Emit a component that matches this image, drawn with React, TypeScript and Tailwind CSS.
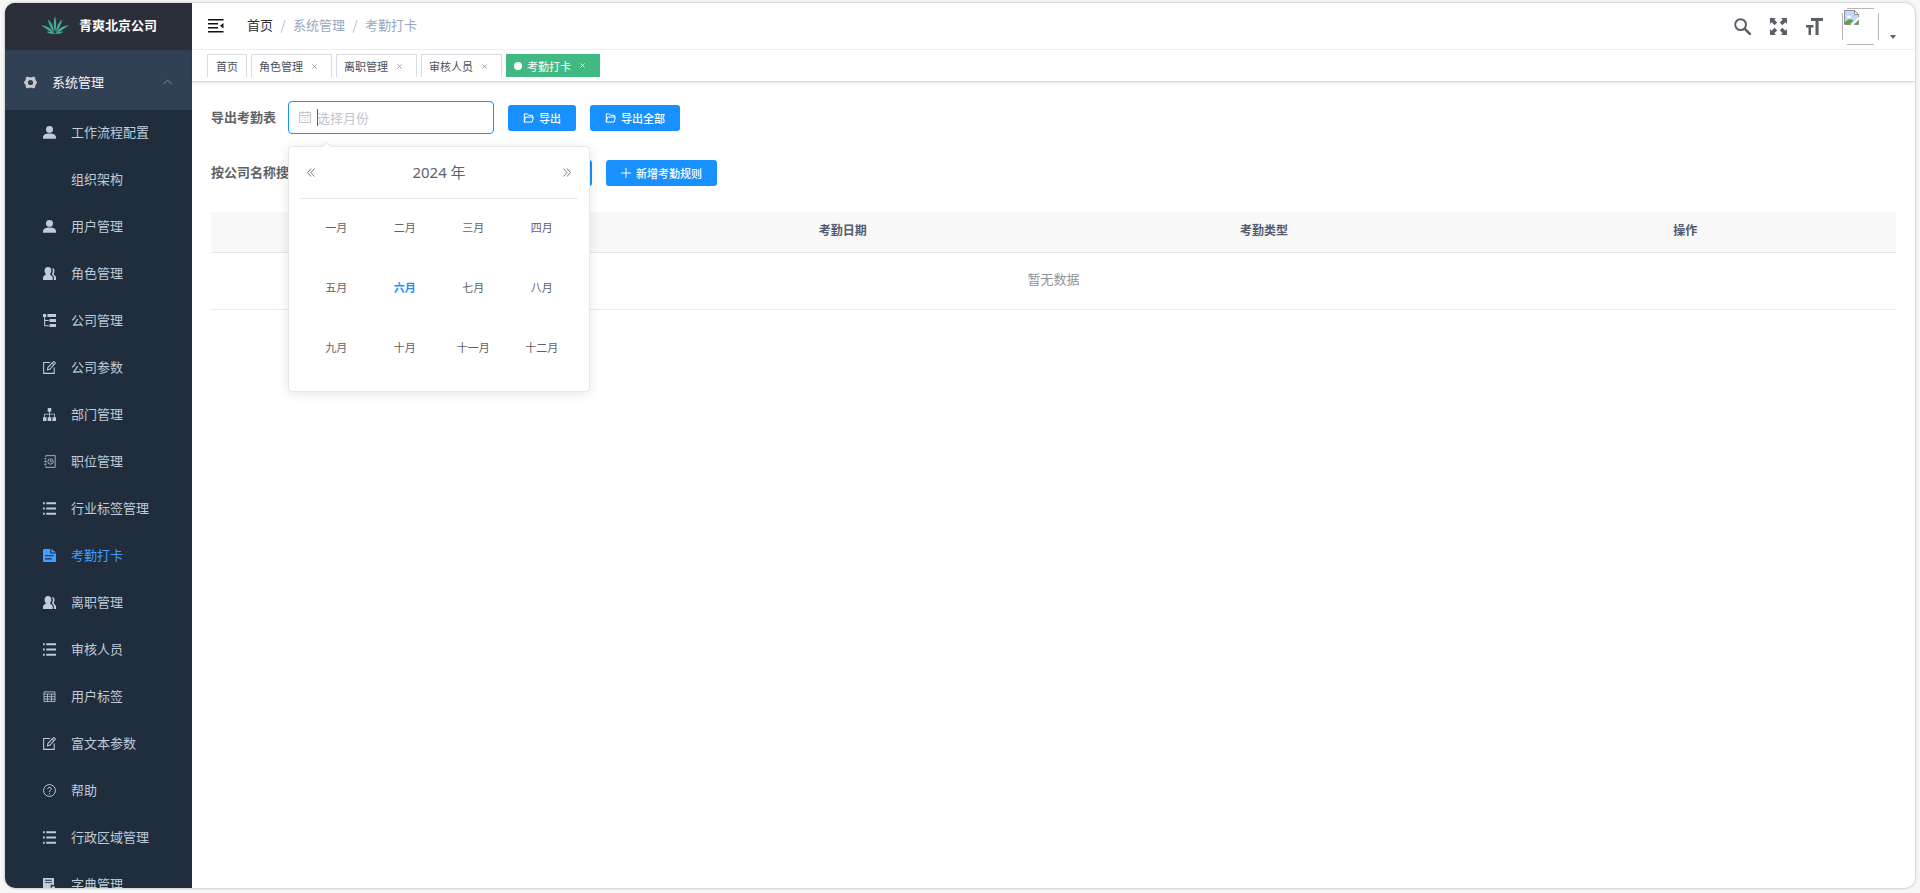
import type { ReactNode } from "react";

type IconName =
  | "user" | "peoples" | "treeTable" | "edit" | "tree" | "post" | "list"
  | "form" | "table" | "help" | "dict";

const iconShapes: Record<IconName, ReactNode> = {
  user: (
    <g fill="currentColor">
      <ellipse cx="8" cy="4.2" rx="4.3" ry="4.2" />
      <path d="M0 15.8V14C0 11 3 9.2 8 9.2s8 1.8 8 4.8v1.8Z" />
    </g>
  ),
  peoples: (
    <g fill="currentColor">
      <path d="M6.2 0C9 0 10.4 2 10.2 4.8 10 6.6 9.400 7.600 8.600 8.500c0 1.600 3.400 2 3.400 4.500v3H0v-3c0-2.500 3.600-2.900 3.600-4.500C2.600 7.500 2 6.500 2 4.800 1.900 2 3.400 0 6.200 0Z" />
      <path d="M11 1.200c2.400.2 3.300 1.900 3.200 4-.1 1.500-.6 2.500-1.200 3.300 0 1.500 3 1.900 3 4.200V16h-2.600v-3c0-2-1.700-3-2.600-4.200.9-1.400 1.300-2.600 1.300-4.200 0-1.300-.4-2.500-1.100-3.400Z" />
    </g>
  ),
  treeTable: (
    <g fill="currentColor">
      <path d="M0 0h4v3.600H0zM5.500 0H16v3.600H5.500zM8 6.200h8v3.600H8zM8 12.400h8V16H8z" />
      <path d="M1.400 3h1.300v4.400H7v1.300H2.700v5H7V15H1.400z" />
    </g>
  ),
  edit: (
    <g fill="none" stroke="currentColor" strokeWidth="1.300">
      <path d="M9 1.800H.8v13.400h13V8" />
      <path d="m5.500 10.800.6-3L13 .9c.8-.5 2.600 1.200 2 2L8.400 10.200Zm6-8.200 2 2" />
    </g>
  ),
  tree: (
    <g fill="currentColor">
      <path d="M5.800 0h4.400v4.600H5.800zM0 11.400h4.400V16H0zM5.800 11.400h4.400V16H5.800zM11.600 11.400H16V16h-4.400z" />
      <path d="M7.500 4h1v3h6v5h-1V8h-5v4h-1V8h-5v4h-1V7h6z" />
    </g>
  ),
  post: (
    <g fill="none" stroke="currentColor" strokeWidth="1">
      <path d="M3.500.8h11.500v14.400H3.500v-2M3.500.8v2M1.500 4.500h2.500M1.500 8h2.500M1.500 11.500h2.500M3.500 5.500v1.500M3.500 9v1.500" />
      <circle cx="9.300" cy="8" r="3.300" />
      <path d="M9.300 6v2.300h2" />
    </g>
  ),
  list: (
    <path
      fill="currentColor"
      d="M0 .4h2.200v2.400H0zM4 .4h12v2.400H4zM0 6.800h2.200v2.400H0zM4 6.800h12v2.400H4zM0 13.200h2.200v2.400H0zM4 13.200h12v2.400H4z"
    />
  ),
  form: (
    <path
      fill="currentColor"
      fillRule="evenodd"
      d="M1.500 0H9v5.500h7V15c0 .6-.4 1-1 1H1c-.6 0-1-.4-1-1V1.500C0 .6.600 0 1.500 0ZM10.300.1 16 4.300h-5.700ZM2.500 7.700v1.300h10.800V7.700Zm0 3.800v1.300h8.300v-1.300Z"
    />
  ),
  table: (
    <g fill="none" stroke="currentColor" strokeWidth="1">
      <path d="M1.200 2.300h13.600v11.900H1.200zM1.200 5h13.600M1.200 8.200h13.600M1.200 11.200h13.600M5.500 5v9M10.500 5v9" />
    </g>
  ),
  help: (
    <g fill="none" stroke="currentColor" strokeWidth="1.200">
      <circle cx="8" cy="8" r="7.300" />
      <path d="M5.800 6.300C5.900 3.200 10.300 3.400 10.200 6c0 1.600-2.200 1.800-2.200 3.900M8 11.200v1.500" />
    </g>
  ),
  dict: (
    <g fill="currentColor">
      <path fillRule="evenodd" d="M0 0h13.500v9H12V8.200H9.500V13H8v2.500H0Zm2.500 2.300v1h8.500v-1Zm0 3v1h8.500v-1Zm0 7v1h5v-1Z" />
      <path d="M9.500 15.900v-2.500h1V12c0-2.500 4.500-2.500 4.500 0v1.400h1v2.500Z" />
    </g>
  ),
};

function MenuIcon({ name }: { name: IconName }) {
  return (
    <svg viewBox="0 0 16 16" className="size-[13px]" aria-hidden="true">
      {iconShapes[name]}
    </svg>
  );
}

const menu: { label: string; icon?: IconName; active?: boolean }[] = [
  { label: "工作流程配置", icon: "user" },
  { label: "组织架构" },
  { label: "用户管理", icon: "user" },
  { label: "角色管理", icon: "peoples" },
  { label: "公司管理", icon: "treeTable" },
  { label: "公司参数", icon: "edit" },
  { label: "部门管理", icon: "tree" },
  { label: "职位管理", icon: "post" },
  { label: "行业标签管理", icon: "list" },
  { label: "考勤打卡", icon: "form", active: true },
  { label: "离职管理", icon: "peoples" },
  { label: "审核人员", icon: "list" },
  { label: "用户标签", icon: "table" },
  { label: "富文本参数", icon: "edit" },
  { label: "帮助", icon: "help" },
  { label: "行政区域管理", icon: "list" },
  { label: "字典管理", icon: "dict" },
];

const tabs = ["角色管理", "离职管理", "审核人员"];
const months = ["一月", "二月", "三月", "四月", "五月", "六月", "七月", "八月", "九月", "十月", "十一月", "十二月"];
const columns = ["", "考勤日期", "考勤类型", "操作"];

function Sidebar() {
  return (
    <aside className="flex w-[187px] shrink-0 flex-col overflow-hidden bg-[#1f2d3d]">
      <a href="#home" className="flex h-[47px] shrink-0 items-center bg-[#2b2f3a] pb-1 pl-9">
        <svg viewBox="0 0 28 18" className="h-[18px] w-7" aria-hidden="true">
          <g fill="#3fae92">
            <path d="M14 0c1.600 5 1.600 11 0 16.500C12.400 11 12.400 5 14 0Z" />
            <path d="M6.800 3.200c3.600 3 5.800 7.500 6.300 13C10 12.500 7.600 8.300 6.800 3.200ZM21.200 3.200c-3.600 3-5.800 7.500-6.300 13 3.100-3.700 5.500-7.900 6.300-13Z" />
            <path d="M0 9.600c5.500 0 9.800 2.200 12.400 6.800C8 15.600 4.800 12 0 9.600ZM28 9.600c-5.500 0-9.800 2.200-12.400 6.800C20 15.600 23.200 12 28 9.600Z" />
            <path d="M5.500 16c3-.8 6-.6 8.500 1.200 2.500-1.800 5.500-2 8.500-1.200-3 1.800-6 2.200-8.500 1.600-2.500.6-5.500.2-8.500-1.600Z" />
          </g>
        </svg>
        <span className="ml-2.5 text-[13px] leading-5 font-bold text-white">青爽北京公司</span>
      </a>
      <button type="button" className="flex h-[60px] shrink-0 items-center bg-[#304156] pt-1 pr-5 pl-[19px] text-[#f4f4f5]">
        <svg viewBox="0 0 16 16" className="size-[13px] text-[#c8c8c8]" aria-hidden="true">
          <path
            fill="currentColor"
            fillRule="evenodd"
            d="M4.500.6 6 1.600h4l1.500-1 2.300 1.300-.1 1.900 1.300 2.600 1 .7v1.800l-1 .7-1.300 2.600.1 1.900-2.300 1.300-1.500-1H6l-1.500 1-2.300-1.300.1-1.900L1 9.600l-1-.7V7.100l1-.7 1.300-2.600-.1-1.900ZM8 4.800a3.200 3.200 0 1 0 0 6.400 3.200 3.200 0 0 0 0-6.400Z"
          />
        </svg>
        <span className="ml-[15px] text-[13px] leading-5">系统管理</span>
        <svg viewBox="0 0 10 6" className="ml-auto h-[6px] w-[9px]" fill="none" stroke="#909399" strokeWidth="1" aria-hidden="true">
          <path d="m.6 5.300 4.400-4.400 4.400 4.400" />
        </svg>
      </button>
      <nav>
        <ul>
          {menu.map((item) => (
            <li key={item.label}>
              <a
                href="#menu"
                className={
                  item.active
                    ? "flex h-[47px] items-center pb-0.5 pl-[38px] text-[#409eff]"
                    : "flex h-[47px] items-center pb-0.5 pl-[38px] text-[#bfcbd9]"
                }
              >
                <span className="flex w-7 shrink-0">{item.icon && <MenuIcon name={item.icon} />}</span>
                <span className="pb-0.5 text-[13px] leading-5">{item.label}</span>
              </a>
            </li>
          ))}
        </ul>
      </nav>
    </aside>
  );
}

function Header() {
  return (
    <header className="flex h-[47px] shrink-0 items-center justify-between border-b border-[#f3f4f6] pr-[19px] pl-4">
      <div className="flex items-center">
        <button type="button" aria-label="收起菜单">
          <svg viewBox="0 0 16 14" className="h-3.5 w-4" fill="#111" aria-hidden="true">
            <path d="M0 0h15.500v1.600H0zM0 4h10v1.600H0zM0 8h10v1.600H0zM0 12h15.500v1.600H0zM15.500 4v5.600L12 6.800z" />
          </svg>
        </button>
        <nav className="ml-[23px] flex items-center pb-0.5 text-[13px] leading-5 text-[#97a8be]">
          <a href="#home" className="text-[#303133]">首页</a>
          <span className="w-5 text-center text-[#b4bccc]">/</span>
          <span>系统管理</span>
          <span className="w-5 text-center text-[#b4bccc]">/</span>
          <span>考勤打卡</span>
        </nav>
      </div>
      <div className="flex items-center text-[#5a5e66]">
        <button type="button" aria-label="搜索" className="mr-[19px]">
          <svg viewBox="0 0 17 17" className="size-[17px]" fill="none" stroke="currentColor" aria-hidden="true">
            <circle cx="6.600" cy="6.600" r="5.400" strokeWidth="2" />
            <path d="m10.800 10.800 5 5" strokeWidth="2.600" strokeLinecap="round" />
          </svg>
        </button>
        <button type="button" aria-label="全屏" className="mr-[19px]">
          <svg viewBox="0 0 17 17" className="size-[17px]" fill="currentColor" aria-hidden="true">
            <path d="M0 0h6L4.300 1.700l2.900 2.900-2.600 2.600-2.900-2.900L0 6ZM17 0v6l-1.700-1.700-2.900 2.900-2.600-2.600 2.900-2.900L11 0ZM0 17v-6l1.700 1.700 2.900-2.900 2.600 2.600-2.900 2.900L6 17ZM17 17h-6l1.700-1.700-2.900-2.900 2.600-2.600 2.900 2.900L17 11Z" />
          </svg>
        </button>
        <button type="button" aria-label="字号" className="mr-[19px]">
          <svg viewBox="0 0 17 17" className="size-[17px]" fill="currentColor" aria-hidden="true">
            <path d="M5 0h12v3h-4.400v14H9.500V3H5zM0 7h7.500v2.500H5V17H2.500V9.500H0z" />
          </svg>
        </button>
        <button type="button" aria-label="用户菜单" className="flex items-end">
          <svg viewBox="0 0 37 37" className="size-[37px]" aria-hidden="true">
            <path d="M5 .5h27M5 36.500h27M.5 5v27M36.500 5v27" fill="none" stroke="#b5b5b5" />
            <g transform="translate(2 2)">
              <path d="M.5.5h10L14.500 4.500v10H.5Z" fill="#c3d8fb" stroke="#8d8d8d" />
              <path d="M3 7.500C3 5.500 5.500 5 6 6.300c1.500-.4 2.300 1.200 1 1.700H3.300Z" fill="#fff" />
              <path d="M1 14V12C4 8.800 7 8.600 9.500 10.500L6 14Z" fill="#55a83a" />
              <path d="M10.500.5v4h4Z" fill="#fff" stroke="#8d8d8d" />
              <path d="M6 15.500 15.500 6v3L9 15.500Z" fill="#fff" />
              <path d="M10.500 14 14 10.500V14Z" fill="#55a83a" />
            </g>
          </svg>
          <svg viewBox="0 0 6 4" className="mb-1.5 ml-[11px] h-1 w-1.5" fill="currentColor" aria-hidden="true">
            <path d="M0 0h6L3 4z" />
          </svg>
        </button>
      </div>
    </header>
  );
}

function CloseMark() {
  return (
    <svg viewBox="0 0 6 6" className="mr-[7px] ml-[9px] size-[5px]" fill="none" stroke="currentColor" strokeWidth="1" aria-hidden="true">
      <path d="m.5.5 5 5m0-5-5 5" />
    </svg>
  );
}

function TabBar() {
  return (
    <div className="relative flex h-8 shrink-0 gap-1 border-b border-[#d8dce5] pt-1 pl-[15px] text-[11px] leading-[22px] text-[#495060] shadow-[0_1px_3px_rgba(0,0,0,0.12)]">
      <a href="#home" className="flex h-[23px] border-x border-t border-[#d8dce5] px-2">首页</a>
      {tabs.map((tab) => (
        <a key={tab} href="#tab" className="flex h-[23px] items-center border-x border-t border-[#d8dce5] px-[7px]">
          {tab}
          <span className="text-[#8a8f99]"><CloseMark /></span>
        </a>
      ))}
      <a href="#tab" className="flex h-[23px] items-center bg-[#42b983] px-2 text-white">
        <span className="mr-[5px] size-2 rounded-full bg-white" />
        考勤打卡
        <CloseMark />
      </a>
    </div>
  );
}

function FolderIcon() {
  return (
    <svg viewBox="0 0 12 11" className="h-[10px] w-[11px]" fill="none" stroke="currentColor" strokeWidth="1.100" aria-hidden="true">
      <path d="M1.400 10V1h3.400l1.400 1.600h4.200v1.900M1.200 10 2.700 4.500h8.700L9.900 10Z" />
    </svg>
  );
}

function PrimaryButton({ icon, children }: { icon: ReactNode; children: ReactNode }) {
  return (
    <button
      type="button"
      className="flex h-[26px] items-center gap-[5px] rounded-[3px] bg-[#1890ff] px-[15px] text-[11px] leading-4 font-medium text-white"
    >
      {icon}
      <span>{children}</span>
    </button>
  );
}

function DoubleChevron({ right }: { right?: boolean }) {
  return (
    <svg viewBox="0 0 8 9" className="h-[9px] w-2" fill="none" stroke="#606266" strokeWidth="0.900" aria-hidden="true">
      {right ? <path d="m.5.5 3.500 4-3.500 4M4 .5l3.500 4-3.500 4" /> : <path d="m4 .5-3.500 4 3.500 4M7.500.5 4 4.500l3.500 4" />}
    </svg>
  );
}

function MonthPanel() {
  return (
    <div className="absolute top-full left-0 z-10 mt-3 w-[302px] rounded border border-[#e4e7ed] bg-white pb-3 shadow-[0_2px_12px_rgba(0,0,0,0.1)]">
      <span className="absolute -top-1 left-[34px] size-[7px] rotate-45 border-t border-l border-[#e4e7ed] bg-white" />
      <div className="mx-[11px] flex h-[52px] items-center justify-between border-b border-[#e6e9f2] px-[7px]">
        <button type="button" aria-label="前一年"><DoubleChevron /></button>
        <span className="pb-0.5 font-['Noto_Sans','Noto_Sans_CJK_SC',sans-serif] text-[15px] leading-5 text-[#606266]">2024 年</span>
        <button type="button" aria-label="后一年"><DoubleChevron right /></button>
      </div>
      <div className="mx-[13px] grid grid-cols-4">
        {months.map((month) => (
          <button
            key={month}
            type="button"
            className={
              month === "六月"
                ? "h-[60px] pb-1 text-[11px] leading-4 font-bold text-[#1890ff]"
                : "h-[60px] pb-1 text-[11px] leading-4 text-[#606266]"
            }
          >
            {month}
          </button>
        ))}
      </div>
    </div>
  );
}

function Filters() {
  return (
    <div className="flex flex-col gap-[22px]">
      <div className="flex h-[33px] items-center">
        <label htmlFor="month" className="mr-3 pb-0.5 text-[13px] leading-5 font-bold text-[#606266]">导出考勤表</label>
        <div className="relative mr-3.5 w-[206px]">
          <input
            id="month"
            type="text"
            placeholder="选择月份"
            className="block h-[33px] w-full rounded border border-[#1890ff] pl-7 text-[13px] leading-5 text-[#606266] outline-none placeholder:text-[#c0c4cc]"
          />
          <svg viewBox="0 0 12 12" className="absolute top-2.5 left-[11px] size-3" fill="none" stroke="#c0c4cc" strokeWidth="1" aria-hidden="true">
            <path d="M.5 1.500h11v10H.5zM.5 4.500h11M3.500 0v3M8.500 0v3M2.500 6.500h1.500M5.300 6.500h1.500M8 6.500h1.500M2.500 9h1.500M5.300 9h1.500M8 9h1.500" />
          </svg>
          <span className="absolute top-2 left-[29px] h-[17px] w-px bg-[#606266]" />
          <MonthPanel />
        </div>
        <div className="flex gap-3.5">
          <PrimaryButton icon={<FolderIcon />}>导出</PrimaryButton>
          <PrimaryButton icon={<FolderIcon />}>导出全部</PrimaryButton>
        </div>
      </div>
      <div className="flex h-[33px] items-center">
        <label htmlFor="company" className="mr-3 pb-0.5 text-[13px] leading-5 font-bold text-[#606266]">按公司名称搜索</label>
        <input id="company" type="text" className="mr-3.5 h-[33px] w-[196px] rounded border border-[#dcdfe6] px-3 text-[13px]" />
        <div className="flex gap-3.5">
          <PrimaryButton
            icon={
              <svg viewBox="0 0 11 11" className="size-[11px]" fill="none" stroke="currentColor" aria-hidden="true">
                <circle cx="4.500" cy="4.500" r="3.800" />
                <path d="m7.500 7.500 3 3" />
              </svg>
            }
          >
            搜索
          </PrimaryButton>
          <PrimaryButton
            icon={
              <svg viewBox="0 0 10 10" className="size-[10px]" fill="none" stroke="currentColor" strokeWidth="1" aria-hidden="true">
                <path d="M5 0v10M0 5h10" />
              </svg>
            }
          >
            新增考勤规则
          </PrimaryButton>
        </div>
      </div>
    </div>
  );
}

function AttendanceTable() {
  return (
    <table className="mt-[23px] w-full table-fixed border-collapse">
      <thead>
        <tr className="h-10 border-b border-[#dfe6ec] bg-[#f8f8f9]">
          {columns.map((column) => (
            <th key={column} className="pb-1 text-center text-[12px] leading-4 font-bold text-[#515a6e]">{column}</th>
          ))}
        </tr>
      </thead>
      <tbody>
        <tr className="h-[57px] border-b border-[#e6ebf5]">
          <td colSpan={4} className="pb-1 text-center text-[13px] leading-5 text-[#909399]">暂无数据</td>
        </tr>
      </tbody>
    </table>
  );
}

export default function App() {
  return (
    <div className="h-screen bg-[#f7f7f7] px-[5px] pt-[3px] pb-[5px] font-['Noto_Sans_CJK_SC','Noto_Sans',sans-serif]">
      <div className="flex h-full overflow-hidden rounded-[10px] bg-white shadow-[0_0_3px_rgba(0,0,0,0.3)]">
        <Sidebar />
        <div className="flex min-w-0 flex-1 flex-col">
          <Header />
          <TabBar />
          <main className="flex-1 px-[19px] pt-[19px]">
            <Filters />
            <AttendanceTable />
          </main>
        </div>
      </div>
    </div>
  );
}
